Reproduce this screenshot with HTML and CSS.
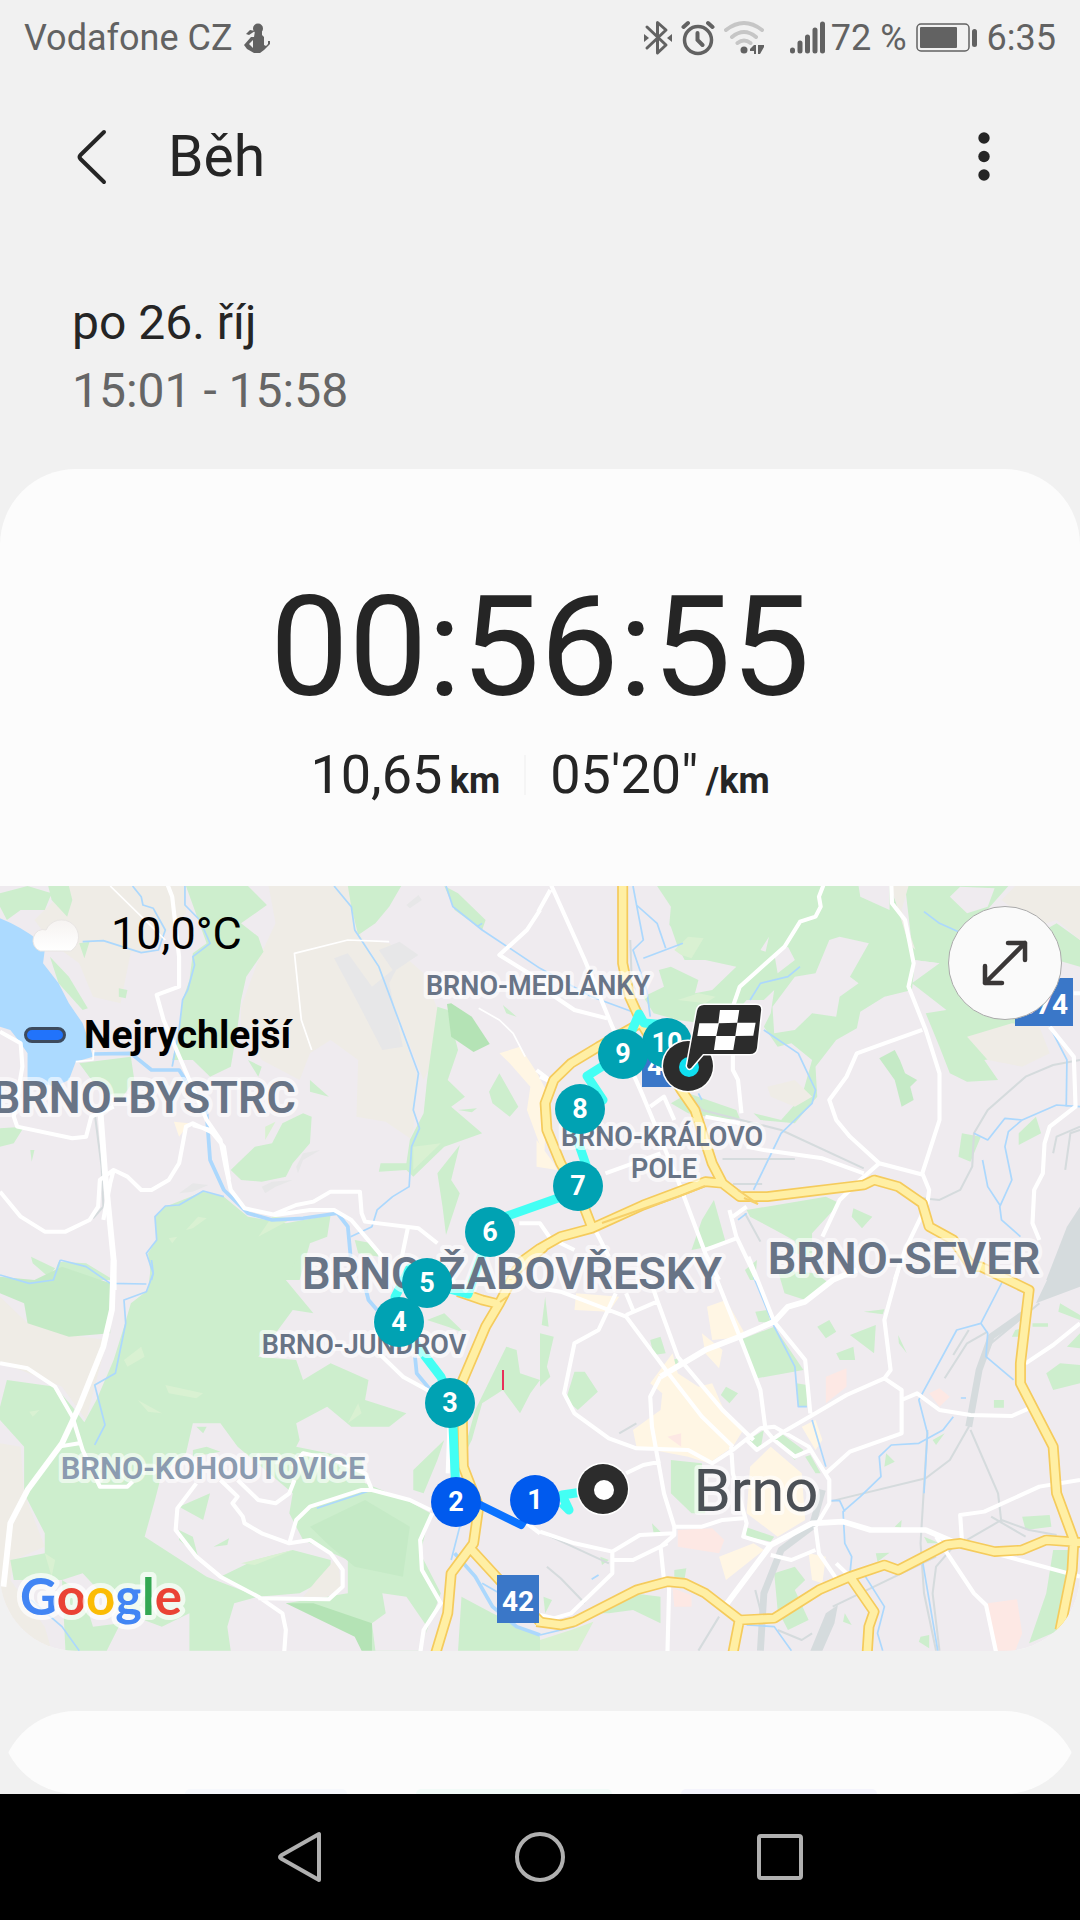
FILE: index.html
```html
<!DOCTYPE html>
<html lang="cs">
<head>
<meta charset="utf-8">
<meta name="viewport" content="width=device-width, initial-scale=1">
<title>Běh</title>
<link rel="stylesheet" href="styles.css">
</head>
<body>
<div class="status">
  <div class="status-group">
    <span>Vodafone CZ</span>
    <svg class="carrier-icon" width="26" height="30" viewBox="0 0 26 30" aria-hidden="true">
      <circle cx="14" cy="5.500" r="5"/><path d="M11 8h7v4l2 2v8l2 1 2-2v-3h2v3l-6 6-4 3h-6l-7-4-3-4 7-8h3zM2 11l4-4 5 1-6 4zM5 21l4 4V17z" fill-rule="evenodd"/>
    </svg>
  </div>
  <div class="status-group">
    <svg width="28" height="36" viewBox="0 0 28 36" aria-label="Bluetooth"><path d="M3 7l19 18-8.500 8V2.500L22 10 3 28" fill="none" stroke="currentColor" stroke-width="3" stroke-linejoin="round" stroke-linecap="round"/><path d="M0 14l5 4-5 4zM28 14l-5 4 5 4z"/></svg>
    <svg class="alarm" width="34" height="36" viewBox="0 0 34 36" aria-label="Budík"><g fill="none" stroke="currentColor" stroke-linecap="round" stroke-width="4"><circle cx="17" cy="20" r="13.500" stroke-width="3.500"/><path d="M16.500 13v7l5 5M2.500 7L7 3M31.500 7L27 3"/></g></svg>
    <svg class="wifi" width="40" height="36" viewBox="0 0 40 36" aria-label="Wi-Fi"><g fill="none" stroke="#c6c6c6" stroke-width="4" stroke-linecap="round"><path d="M2 10q18-14 36 0M8 17q12-10 24 0M13.500 23q6.500-5 13 0"/></g><circle cx="20" cy="30" r="3.500"/><path d="M32 25v9h-2v-3h-4v-2l4-4zM34 25v9h2l4-7v-2z"/></svg>
    <svg class="signal" width="36" height="36" viewBox="0 0 36 36" aria-label="Signál"><g stroke="currentColor" stroke-width="5" stroke-linecap="round"><path d="M2.500 30v1M10 23v8M17.500 17v14M25 10v21M32.500 4v27"/></g></svg>
    <span>72 %</span>
    <svg class="battery" width="62" height="30" viewBox="0 0 62 30" aria-label="Baterie"><rect x="1" y="1" width="52" height="27" rx="4" fill="none" stroke="currentColor" stroke-width="1.500"/><rect x="4" y="4" width="37" height="21" rx="1"/><rect x="56" y="6" width="5" height="18" rx="2.500"/></svg>
    <span>6:35</span>
  </div>
</div>

<header class="toolbar">
  <button class="icon-button" type="button" aria-label="Zpět">
    <svg width="30" height="56" viewBox="0 0 30 56"><path d="M27 3L3.500 26q-2 2 0 4L27 53" fill="none" stroke="currentColor" stroke-width="4" stroke-linecap="round"/></svg>
  </button>
  <h1>Běh</h1>
  <button class="icon-button more" type="button" aria-label="Další možnosti">
    <svg width="12" height="50" viewBox="0 0 12 50"><circle cx="6" cy="6" r="5.700"/><circle cx="6" cy="24.500" r="5.700"/><circle cx="6" cy="43" r="5.700"/></svg>
  </button>
</header>

<main>
  <section class="when">
    <p>po 26. říj</p>
    <p class="muted">15:01 - 15:58</p>
  </section>

  <section class="card">
    <div class="summary">
      <p class="timer">00:56:55</p>
      <div class="metrics">
        <p>10,65 <b>km</b></p>
        <span class="divider"></span>
        <p>05'20" <b>/km</b></p>
      </div>
    </div>

    <div class="map">
      <svg class="map-canvas" viewBox="0 886 1080 765" role="img" aria-label="Mapa trasy, Brno">
        <defs>
          <g id="highways">
            <path transform="translate(540 880) scale(.3444 .3333)" d="M240 0V250L260 350 300 440 410 630 450 690 500 850 530 910 580 950 660 950 940 915 970 900 1040 920 1110 970 1130 1040 1200 1080 1260 1170M290 430L170 500 90 550 40 600 15 670 20 750 60 850 120 960 150 1040M-60 1150L0 1105 60 1070 150 1045 300 975 480 905 530 910"/>
            <path transform="translate(0 1260) scale(.3444 .3333)" d="M1580 -40L1500 30 1450 130 1410 200 1340 370 1345 620 1390 740 1375 850 1310 940 1300 1060 1265 1180M1330 95L1400 120 1440 130M1370 870L1450 960 1568 1085"/>
            <path transform="translate(540 1260) scale(.3444 .3333)" d="M-10 1085L60 1095 100 1085 280 990 370 965 420 970 480 1000 580 1080 680 1075 810 990 900 950 1000 915 1040 930 1180 855 1220 850 1320 875 1400 870 1470 840 1580 848M580 1075L560 1180M900 950L970 1055 955 1100 950 1180M1240 20L1280 20 1420 90 1395 310 1395 370 1490 560 1500 700 1550 840 1545 930 1510 1110"/>
          </g>
        </defs>
        <rect class="land" y="886" width="1080" height="765"/>

        <!-- Land cover, one group per quarter of the map -->
        <g transform="translate(0 880) scale(.3444 .3333)">
          <path class="field" d="M200 18H540V100L480 160 430 220 380 215 350 370 270 350 230 250 150 190 100 120ZM780 18H1010L1040 150 1100 260 1210 580 1200 750 1190 775 1120 725 1035 710 1040 540 960 480 900 520 870 600 760 540 700 440 700 380 750 240 800 130ZM1060 180L1130 190 1230 280 1290 440 1270 520 1230 600 1100 260Z"/>
          <path class="airfield" d="M970 235L1010 220 1080 320 1140 270 1100 210 1160 185 1215 225 1150 270 1130 310 1170 500 1110 510 1040 370ZM1180 75L1215 45 1225 60 1190 85ZM860 860L880 820 930 810 880 840 865 880ZM760 920L790 905 850 900 800 920 770 940ZM520 940L560 910 605 915 560 935Z"/>
          <path class="green" d="M540 18H720L775 75 700 130 750 170 765 215 715 290 700 360 690 440 670 560 610 590 560 540 500 540 520 450 530 360 550 300 560 220 600 190ZM1010 18H1165L1130 80 1090 130 1040 165 1020 80ZM0 40L80 18 150 40 130 90 60 90 20 120 0 80ZM140 18H200L210 60 195 110 150 60ZM145 230L200 290 255 385 240 390 170 310ZM230 190L260 185 245 235ZM345 325L370 330 365 355 345 350ZM230 550L380 530 390 600 350 660 280 620ZM690 850L740 800 790 790 820 730 880 700 905 710 900 790 850 850 830 890 760 905 700 900 670 870ZM480 980L590 935 650 950 720 1010 830 1030 960 1005 950 1070 900 1090 870 1200H440L430 1120 455 1080 450 1010ZM1270 380L1300 390 1330 510 1300 600 1350 650 1310 680 1400 760 1290 800 1200 890 1180 870 1100 875 1105 850 1180 850 1190 780 1230 700 1240 600ZM1335 795L1310 900 1335 940 1295 1065 1285 980 1270 880ZM1420 635L1450 580 1505 680 1480 710 1430 670ZM1290 18L1330 40 1410 120 1400 150 1320 90ZM900 600L955 650 900 635ZM170 1145L250 1150 330 1200H150ZM90 1130L160 1165 140 1190 95 1150ZM0 745L70 740 40 790 0 800ZM720 540L760 560 750 590ZM1330 690L1385 685 1370 697ZM1460 375L1500 410 1470 400ZM88 810H100L92 845ZM1030 1080L1080 1090 1100 1130 1040 1120Z"/>
          <path class="meadow" d="M540 1050L575 1010 600 1015 560 1045ZM770 740L800 725 770 780ZM750 1070L790 1010 850 1015ZM1200 800L1280 790 1200 870ZM490 1075L515 1070 500 1090Z"/>
          <path class="park" d="M1298 372L1310 370 1370 410 1422 492 1375 516 1310 470Z"/>
          <path class="shopping" d="M1450 520L1510 500 1560 580 1590 640 1580 830 1530 690 1540 620 1480 550ZM505 725L550 730 520 770Z"/>
          <path class="lake" d="M0 115Q60 140 110 180L130 210 125 250 170 310 200 370 240 430 250 460 270 530 220 545 200 600 160 620 80 600 80 520 60 490 30 450 0 440Z"/>
        </g>
        <g transform="translate(540 880) scale(.3444 .3333)">
          <path class="green" d="M300 18H1015L1050 110 1090 230 1080 330 1000 350 930 395 920 445 860 480 800 560 805 650 740 730 640 720 620 700 700 720 760 650 790 540 730 490 690 500 650 440 670 400 680 330 650 360 600 360 550 420 470 430 400 420 330 400 300 350 360 320 345 270 380 260 460 300 450 340 500 330 570 260 480 240 420 240 400 200 380 140 340 90ZM1060 18H1360L1290 100 1400 190 1500 130 1568 180V260L1500 240 1510 330 1380 480 1360 530 1290 540 1330 600 1240 605 1190 580 1160 500 1120 400 1180 390 1080 310 1160 250 1085 240ZM600 990L830 950 870 970 790 1060 770 1100 700 1060 610 1010ZM910 985L965 1010 935 1045 905 1010ZM505 960L540 1090 440 1110 470 1020ZM1390 760L1440 710 1455 760 1390 795ZM1225 760L1280 770 1250 845 1215 830ZM380 670L430 640 570 690 580 715 540 720 430 700ZM595 1170L630 1140 625 1200H610ZM740 1060H790V1130L740 1120Z"/>
          <path class="land" d="M840 180L870 170 955 190 900 290 925 310 870 350 860 410 790 400 740 450 680 460 675 380 740 290 800 280ZM680 220L720 200 740 240 690 280ZM925 18H1015V90L930 50ZM1190 50L1220 20 1320 25 1300 80 1240 100ZM1085 240L1160 250 1090 280ZM640 210L665 170 655 215ZM255 18H340L380 80 375 140 300 70Z"/>
          <path class="field" d="M1380 18H1568V180L1500 120 1440 140 1340 60ZM1240 470L1370 430 1450 440 1480 520 1400 560 1300 540ZM660 620L740 600 790 650 740 680 670 650ZM1020 18H1070L1050 90 1090 210 1070 190 1040 90Z"/>
          <path class="meadow" d="M390 210L430 170 475 175 440 235 410 225ZM400 360L460 340 510 350 480 370Z"/>
          <path class="wood" d="M985 535L1030 510 1045 540 1060 580 1095 600 1075 620 1085 660 1050 680 1030 600Z"/>
          <path class="shopping" d="M-10 780L40 850 50 870 -10 860Z"/>
          <path class="rail-yard" d="M1568 980L1530 1040 1470 1200H1568Z"/>
        </g>
        <g transform="translate(0 1260) scale(.3444 .3333)">
          <path class="field" d="M0 110L80 190 240 230 310 240 250 480 180 380 60 330 0 310ZM0 550L60 560 70 700 130 860 40 900 30 960 130 1100 150 1172H0Z"/>
          <path class="green" d="M440 0H860L830 60 910 160 850 150 750 290 860 300 880 360 960 310 1070 360 1060 420 1180 460 1130 500 1020 500 950 440 860 490 870 540 860 560 1050 600 1060 670 1180 720 1250 760 1220 880 1280 1000 1240 1110 1220 1172H1080L1050 1100 830 1030 1010 1000 1010 900 880 840 840 760 850 700 690 560 640 490 560 490 540 580 470 640 450 720 420 830 600 950 750 1010 680 1030 660 1100 670 1172H550L550 1060 470 1100 340 1050 240 940 180 960 40 960 30 900 130 880 130 820 70 700 70 560 0 480V440L20 360 160 380 210 440 245 487 280 420 330 300 360 200 380 130 430 90Z"/>
          <path class="green" d="M1200 630L1290 540 1270 600 1230 700 1200 690ZM1380 450L1470 260 1500 270 1510 340 1568 360 1540 400 1510 460 1460 390 1400 430 1370 540 1340 600ZM1340 1010L1430 1060 1568 1130V1172H1330ZM520 740L610 700 590 780ZM520 810L560 830 575 890 520 840ZM620 860L665 835 660 855ZM180 960L240 1000 270 1100 350 1090 310 1172H190ZM640 950L740 900 850 870 960 900 960 950 870 1000 750 1010ZM570 500L600 500 590 520ZM560 570L600 560 640 575 560 590ZM1240 180L1290 160 1350 220 1300 200Z"/>
          <path class="wood" d="M0 50L100 60 180 20 320 70 320 220 200 230 80 190 70 130 0 100ZM900 800L1060 720 1190 800 1170 950 1030 920 960 860Z"/>
          <path class="meadow" d="M480 375L590 400 570 415 490 400ZM400 420L470 460 430 455ZM360 300L410 260 420 290 370 320ZM1010 490L1040 430 1050 460ZM85 455L115 450 95 470ZM700 910L850 870 740 915ZM130 880L160 900 150 950Z"/>
          <path class="land" d="M1180 1010L1110 1000 1120 1060 1080 1090 1090 1172H1230L1240 1100ZM450 0H460L520 0Z"/>
          <path class="park" d="M830 1030L910 1030 1080 1090V1172H1050L1030 1130Z"/>
          <path class="field" d="M920 960L980 890 990 980 950 1010 880 1010Z"/>
        </g>
        <g transform="translate(540 1260) scale(.3444 .3333)">
          <path class="green" d="M580 240L680 200 765 330 630 355ZM100 335L130 335 168 395 110 450 75 420ZM380 600L470 610 480 760 440 760 380 700ZM0 220L40 230 20 320 30 350 0 380ZM5 195L15 110 25 200ZM900 225L975 195 970 280ZM805 200L840 180 860 215 830 235ZM860 280L910 260 915 300 870 300ZM940 155L1000 148 995 163ZM1040 225L1065 280 1042 250ZM1470 340L1510 310 1568 315V370L1490 390ZM1510 130L1568 165V180L1505 155ZM1430 190H1475V200H1430ZM1380 210L1420 200V230H1370ZM1530 260L1568 220V265ZM1490 870L1540 870 1510 1110 1420 1150 1470 1000ZM1400 770L1480 765 1485 800 1410 810ZM680 940L740 920 770 960 740 990 780 1080 720 1110 690 1050ZM150 1060L270 1000 350 1010 350 1090 270 1050 200 1060ZM320 240L350 230 365 280 330 285ZM385 300L400 295 400 325ZM605 540L650 510 640 570ZM670 530L700 520 765 570 740 600ZM770 590L785 585 815 640 800 640ZM540 380L575 400 550 430 525 405ZM595 800L680 830 670 845 600 830ZM690 30L800 40 840 70 770 120 710 100ZM625 155L660 150 670 190 635 185ZM745 370L775 375V440H750ZM1005 580L1030 605 1000 620ZM1140 540L1175 520 1150 555ZM1318 420H1347V443H1318ZM1115 830L1160 850 1125 850ZM1030 800L1050 780 1048 805ZM390 930L425 925 420 955 390 950ZM885 1060L905 1095 880 1085ZM1105 1130L1130 1125V1165L1100 1145ZM975 880L1015 878 980 905ZM175 890L200 900 180 915ZM325 790L350 815 330 820ZM10 1010L35 1020 15 1060Z"/>
          <path class="meadow" d="M0 1140L90 1110 155 1085 110 1172H0Z"/>
          <path class="shopping" d="M105 100L230 110 200 155 100 150ZM385 280L400 340 460 380 500 370 530 440 590 510 560 560 490 610 430 590 280 560 270 510 350 450 355 400 320 370ZM485 140L540 120 600 230 500 240ZM470 220L530 270 520 325 480 280ZM610 620L670 560 760 640 770 780 690 830 600 760ZM520 890L620 850 650 870 540 960ZM780 880L830 890 820 970 790 960ZM760 500L800 480 820 540 800 570Z"/>
          <path class="hospital" d="M400 810L500 805 535 840 520 880 400 860ZM830 350L890 325 890 380 830 430ZM1130 400L1160 385 1190 410 1160 440ZM1300 1030L1385 1018 1400 1120 1380 1172H1320ZM385 985L440 1005V1040L390 1040ZM370 530L410 520V560Z"/>
          <path class="rail-yard" d="M1500 0H1568V80L1440 130ZM830 1060L865 1035 855 1090 820 1172H785Z"/>
        </g>

        <g class="rail">
          <path transform="translate(540 880) scale(.3444 .3333)" d="M1568 540L1490 555 1410 590 1300 690 1260 760 1255 860 1220 930 1160 960 1110 955M400 600L470 690 700 750 940 865M530 837H740M560 912H645M595 1000L640 1085M1490 820L1500 770 1568 740M1525 870L1540 760 1568 750M262 180L270 400"/>
          <path transform="translate(540 1260) scale(.3444 .3333)" d="M1450 130L1310 250 1270 330 1245 500 1190 600 1120 655 840 725M1250 510L1330 700 1340 790M1125 510L1105 850 1115 1000 1150 1172M1300 215L1240 250 1175 355M1245 210L1200 285M850 1040L1150 890M20 920L60 955 130 1030M520 1070L460 1172M0 815L200 910M1240 840L1340 780 1420 810 1500 825M1310 770L1410 830M1200 860L1150 920 1140 1000 1160 1172M230 520L280 490M690 1110L760 1140 790 1120M625 990L640 1050"/>
          <path class="rail-wide" transform="translate(540 1260) scale(.3444 .3333)" d="M820 690L790 800 700 870 650 1000 640 1172M1420 150L1310 230 1275 330 1245 500"/>
          <path transform="translate(0 880) scale(.3444 .3333)" d="M275 700L295 860 300 980 270 1015"/>
        </g>

        <g class="water">
          <path transform="translate(0 880) scale(.3444 .3333)" d="M385 18L410 50 415 75 445 85 480 150 460 210 410 218 300 182 240 185M537 18V75L580 120 610 190 560 230 565 255 545 330 530 360 520 450 500 560M970 18L1020 80 1030 150 1100 260 1215 580 1200 690 1218 745 1195 800 1188 920 1140 950 1095 990 1080 1040 1018 1070M1295 18L1315 80 1400 150 1568 265M650 950L590 933 520 975 480 978 450 1010 455 1080 425 1120 445 1180 440 1200M1385 140L1400 130"/>
          <path class="river" transform="translate(0 880) scale(.3444 .3333)" d="M270 522L380 520 440 570 520 570 600 700 610 840 650 930 720 1000 790 1020 880 1015 980 1000 1010 1040 1018 1130"/>
          <path transform="translate(540 880) scale(.3444 .3333)" d="M270 18L285 100 300 180 270 210 310 330 320 410M415 190L300 235M280 75L340 130 365 205M755 260L720 290 640 310 610 360M650 450L750 520 800 630 790 670 740 720 700 760 620 930M1115 95L1160 130 1215 155M1480 440L1530 540 1528 680M1568 680L1500 675 1400 720 1360 755 1350 800 1370 900 1335 980 1340 1020 1395 1070M1335 975L1300 920 1285 840M1400 720L1350 715 1300 780 1260 760M0 265L150 350 280 400M600 1000L575 1020M460 640L470 660"/>
          <path transform="translate(0 1260) scale(.3444 .3333)" d="M440 0L445 40 425 95 360 120 365 190 335 340 275 375 305 495 275 555M0 45L85 70 155 60 175 0M175 0L250 20 320 70 425 72M90 1020L180 1100 230 1172M920 745L1080 690M1400 970L1568 1070M1335 800L1310 900"/>
          <path class="river" transform="translate(0 1260) scale(.3444 .3333)" d="M1055 60L1070 120 1095 150M1205 290L1210 340 1250 390M1320 880L1380 950 1430 1040 1500 1100 1568 1125"/>
          <path transform="translate(540 1260) scale(.3444 .3333)" d="M620 50L680 200 740 320 750 440 775 440M790 480L830 620M1345 60L1280 190 1210 210 1100 420 1125 520 1115 700M1280 190L1300 220 1295 290 1375 360M1200 470L1170 510 1100 550 1020 555 985 590 990 650 930 710 880 755 885 850 905 890 900 940M845 722L870 722 885 755M945 950L1000 1040 980 1120 995 1172M0 1125L100 1100M600 1095L680 1100 730 1172M1110 900L1155 1172M150 958L170 945M1222 414H1237"/>
        </g>

        <g class="road">
          <path transform="translate(0 880) scale(.3444 .3333)" d="M485 10L500 50 520 230 520 320 455 345 475 420 600 720 640 780 655 860 670 930 710 985 800 1005 900 990 970 990 1020 1020 1110 1130M560 735L610 750 650 800 665 900M0 455L60 490 65 560 40 710 50 740 210 775 250 770 265 710 330 680M0 935L60 1010 130 1055 190 1055 260 1020 285 980 290 900 330 870 370 890 410 930 440 930 490 900 520 850 540 740 560 730 620 760M790 1005L860 975 910 965 960 935 1045 935 1050 1000 1060 1025 1215 1045 1270 1090M1185 1040L1165 1140M330 870L320 910 300 1020M1568 90L1530 150 1450 225 1520 270 1568 300"/>
          <path class="road-major" transform="translate(0 880) scale(.3444 .3333)" d="M292 700L305 880 330 1140V1230"/>
          <path class="road-minor" transform="translate(0 880) scale(.3444 .3333)" d="M320 18L480 180M1130 185L1010 180 855 220 875 420 905 510M1390 385L1450 420 1490 460 1525 530M220 545L270 540 272 510"/>
          <path transform="translate(540 880) scale(.3444 .3333)" d="M30 10L130 240 210 440 300 650 400 900 480 1120 520 1200M30 30L-5 95M825 10L810 50 815 80 800 110 755 125 710 200 580 320 560 380V570L575 600 585 700M1020 10L1022 70 1060 120 1085 250 1070 320 1120 450 1160 580 1160 720 1110 880 1130 930 1125 970 1060 1110 1030 1200M1110 450L1000 490 920 520 890 590 840 660 860 720 900 770 985 850 1115 885M985 850L930 900 870 960 820 1070M480 710L580 730M600 800L650 810 820 835 940 880M1480 440L1550 530 1555 680 1480 740 1465 790 1460 880 1435 930 1430 1030 1450 1080M1550 340H1570M0 320L100 390 195 415M190 880L350 820M320 680L360 650 390 720M550 990L570 1070 630 1200M480 1110L570 1075M600 980L560 1010M160 1050L200 1130M-60 1030L0 1030 30 1075 100 1110M-10 570L40 610 0 590"/>
          <path transform="translate(0 1260) scale(.3444 .3333)" d="M0 310L80 325 160 380 210 470 240 570 290 680 370 680 385 665M170 560L230 550M570 670L515 745 510 810 570 890 640 950 750 1010 820 1060 830 1110 825 1180M640 660L690 710 675 730 705 770 710 790 760 820 840 850 900 840 960 880 995 930 995 980 955 1018 750 1015M840 850L860 780 900 740 1050 690 1080 690 1060 640 970 600 880 580 850 620M1080 690L1190 720 1250 750M1255 760L1220 840 1225 930 1280 1030 1230 1110 1220 1180M690 660L750 720 800 730 840 700 855 660M1090 180L1100 280 1170 350 1250 395M1305 500L1300 640M1530 790L1568 820M1290 20L1320 70"/>
          <path class="road-major" transform="translate(0 1260) scale(.3444 .3333)" d="M330 0L325 150 300 260 230 440 180 550 80 690 30 790 10 980"/>
          <path transform="translate(540 1260) scale(.3444 .3333)" d="M0 85L60 95 200 150 250 170 380 350 470 470 560 560M320 60L340 120 400 290 530 450 620 540M340 125L250 165M250 100L270 150M220 100L170 210 100 250 70 400 100 460 200 535 280 565 430 570 500 610 560 570M350 350L320 410 325 500 360 700 390 800 390 825 350 860 360 960 375 980 370 1180M510 50L580 230 640 390 655 510 680 540 740 590 785 570M605 -10L680 185 770 300 785 460M1045 10L1000 180 1018 330 1000 355 890 405 800 460 700 520 630 570 600 540M1000 355L1050 390 1050 520 900 575 830 640M560 570L640 505 680 500 780 560 840 660 840 730 800 800M555 560L560 640 600 790 590 830 670 855M670 885L730 900 800 870M800 800L810 880 860 955M860 910L900 950M1050 420L1095 400 1160 450 1250 465 1370 468 1420 445M1568 660L1450 680 1290 755 1220 765 1225 840M1150 830L1260 1000 1295 1035 1325 1180M1320 880L1568 950M1410 310L1490 255 1568 190M0 815L100 850 210 875 290 825 390 820M210 875V940L90 1060 40 1075 0 1065M215 900L270 900 370 850M390 800L470 800 530 780 590 775M250 640L300 615 350 605"/>
          <path class="road-major" transform="translate(540 1260) scale(.3444 .3333)" d="M350 350L480 270 580 230 680 185 720 140 770 125 850 60 920 30M540 1035L670 855 790 790 880 785 960 810 1120 810 1210 850"/>
        </g>

        <use href="#highways" class="highway-edge"/>
        <use href="#highways" class="highway"/>
        <path class="highway-split" d="M602 1223L680 1196 705 1186M744 1198l14 6-20-14M500 1302l7-5"/>

        <g class="signs">
          <rect x="497" y="1575" width="42" height="48"/>
          <rect x="642" y="1039" width="42" height="48"/>
          <rect x="1015" y="978" width="58" height="48"/>
          <text x="518" y="1611">42</text>
          <text x="663" y="1075">42</text>
          <text x="1044" y="1014">374</text>
        </g>

        <g class="route">
          <path d="M603 1489L562 1495 569 1510 562 1503M456 1495L452 1403 441 1377 399 1322 395 1297 410 1268 427 1283 468 1294 490 1232M490 1222L578 1191M578 1186L586 1165 574 1130 580 1109 603 1100 587 1076 622 1054 639 1014 644 1023 667 1025"/>
          <path class="fast" d="M456 1493L521 1525 535 1503"/>
        </g>
        <path class="tick" d="M503 1370v20"/>

        <g class="labels">
          <text class="town" x="296" y="1113" text-anchor="end">BRNO-BYSTRC</text>
          <text class="town" x="512" y="1289">BRNO-ŽABOVŘESKY</text>
          <text class="town" x="904" y="1274">BRNO-SEVER</text>
          <text x="538" y="995">BRNO-MEDLÁNKY</text>
          <text x="662" y="1146">BRNO-KRÁLOVO</text>
          <text x="664" y="1178">POLE</text>
          <text x="364" y="1354">BRNO-JUNDROV</text>
          <text class="quarter" x="213" y="1479">BRNO-KOHOUTOVICE</text>
          <text class="city" x="756" y="1511">Brno</text>
        </g>

        <g class="pins">
          <circle cx="667" cy="1043" r="25"/><text x="667" y="1052">10</text>
          <circle cx="623" cy="1054" r="25"/><text x="623" y="1063">9</text>
          <circle cx="580" cy="1109" r="25"/><text x="580" y="1118">8</text>
          <circle cx="578" cy="1186" r="25"/><text x="578" y="1195">7</text>
          <circle cx="490" cy="1232" r="25"/><text x="490" y="1241">6</text>
          <circle cx="427" cy="1283" r="25"/><text x="427" y="1292">5</text>
          <circle cx="399" cy="1322" r="25"/><text x="399" y="1331">4</text>
          <circle cx="450" cy="1403" r="25"/><text x="450" y="1412">3</text>
          <circle class="fast" cx="456" cy="1502" r="25"/><text x="456" y="1511">2</text>
          <circle class="fast" cx="535" cy="1500" r="25"/><text x="535" y="1509">1</text>
        </g>

        <g class="ends">
          <circle class="dark" cx="603" cy="1489" r="25"/><circle class="white" cx="604" cy="1490" r="10"/>
          <circle class="dark" cx="688" cy="1066" r="25"/><circle class="now" cx="689" cy="1067" r="10"/>
          <path class="dark" d="M704 1005H756Q762 1005 761 1011L757 1048Q756 1054 750 1054H703L691 1068Q688 1070 687 1066L697 1011Q698 1005 704 1005Z"/>
          <path class="white" transform="translate(380 980) scale(.3333)" d="M1020 90L1078 90 1072 128 1127 128 1120 167 1067 168 1060 210 1002 210 1008 168 952 168 958 130 1015 130ZM1017 130L1009 168 1066 168 1072 128Z" fill-rule="evenodd"/>
        </g>

        <text class="google" x="20" y="1615"><tspan fill="#4285f4">G</tspan><tspan fill="#ea4335">o</tspan><tspan fill="#fbbc05">o</tspan><tspan fill="#4285f4">g</tspan><tspan fill="#34a853">l</tspan><tspan fill="#ea4335">e</tspan></text>
      </svg>

      <div class="overlay">
        <p class="weather">
          <svg width="54" height="40" viewBox="0 0 54 40" aria-label="Oblačno"><defs><linearGradient id="cloud" x2="0" y2="1"><stop stop-color="#f6f3f1"/><stop offset="1" stop-color="#fff"/></linearGradient></defs><path d="M12 37A10 11 0 1 1 18 16A17 17 0 1 1 43 37Z" fill="url(#cloud)" stroke="#e9e6e4"/></svg>
          <span>10,0°C</span>
        </p>
        <p class="legend"><i class="swatch"></i><span>Nejrychlejší</span></p>
      </div>
      <button class="expand" type="button" aria-label="Zvětšit mapu">
        <svg width="46" height="46" viewBox="0 0 46 46"><path d="M3 43L43 3M26 3H43V20M3 26V43H20" fill="none" stroke="#3a3737" stroke-width="4.500" stroke-linecap="round" stroke-linejoin="round"/></svg>
      </button>
    </div>
  </section>

  <section class="card-peek">
    <div class="peek-body">
      <span class="chip blue"></span><span class="chip mint"></span><span class="chip violet"></span>
    </div>
  </section>
</main>

<nav class="system-nav" aria-label="Systémová navigace">
  <button type="button" aria-label="Zpět"><svg width="52" height="52" viewBox="0 0 52 52"><path d="M45 3V49L7 27.500Q5 26 7 24.500Z"/></svg></button>
  <button type="button" aria-label="Domů"><svg width="52" height="52" viewBox="0 0 52 52"><circle cx="26" cy="26" r="23"/></svg></button>
  <button type="button" aria-label="Poslední aplikace"><svg width="52" height="52" viewBox="0 0 52 52"><rect x="5" y="5" width="42" height="42" rx="2"/></svg></button>
</nav>
</body>
</html>
```
FILE: styles.css
```css
* { box-sizing: border-box; }

body {
  margin: 0;
  min-height: 100vh;
  display: flex;
  flex-direction: column;
  background: #f1f1f1;
  color: #252525;
  font-family: Roboto, "Noto Sans", sans-serif;
}

p, h1 { margin: 0; font-weight: 400; }
svg { display: block; fill: currentColor; }

button {
  padding: 0;
  border: 0;
  background: none;
  color: inherit;
  font: inherit;
}

/* Status bar */
.status {
  display: flex;
  justify-content: space-between;
  padding: 16px 24px;
  color: #626262;
  font-size: 36px;
  line-height: 44px;
}
.status-group { display: flex; align-items: center; }
.carrier-icon { margin-left: 12px; }
.alarm { margin-left: 9px; }
.wifi { margin-left: 9px; }
.signal { margin: 0 5px 0 26px; }
.battery { margin: 0 9px; }

/* Toolbar */
.toolbar {
  display: flex;
  align-items: center;
  height: 162px;
  padding: 0 64px 0 60px;
}
.toolbar h1 { font-size: 57px; line-height: 68px; margin-left: 44px; }
.icon-button { display: grid; place-items: center; width: 64px; height: 64px; }
.more { margin-left: auto; }

.when {
  padding: 51px 72px 44px;
  font-size: 48px;
  line-height: 68px;
}
.muted { color: #666; }

/* Workout card */
.card {
  border-radius: 76px;
  overflow: hidden;
  background: #fcfcfc;
}
.summary { padding: 98px 24px 79px; text-align: center; }
.timer { font-size: 140px; line-height: 160px; }
.metrics {
  display: flex;
  justify-content: center;
  align-items: center;
  gap: 24px;
  margin-top: 16px;
  font-size: 54px;
  line-height: 64px;
}
.metrics b { margin-left: -6px; font-size: 36px; line-height: 36px; }
.divider { width: 2px; height: 40px; background: #f5f5f5; }

/* Map */
.map { position: relative; }
.map-canvas { width: 100%; height: auto; }
.land { fill: #efebef; }
.field { fill: #efece6; }
.airfield { fill: #e7e7e8; }
.green { fill: #cdeecd; }
.wood { fill: #c5eac6; }
.meadow { fill: #d9f1d2; }
.park { fill: #b4e3b5; }
.lake { fill: #acdaff; }
.shopping { fill: #fff6e4; }
.hospital { fill: #fde8e4; }
.rail-yard { fill: #d5dbdd; }
.rail, .water, .road { fill: none; stroke-linejoin: round; }
.rail { stroke: #d5dbdd; stroke-width: 6; }
.rail-wide { stroke-width: 20; }
.water { stroke: #acd8fd; stroke-width: 5; }
.river { stroke-width: 11; }
.road { stroke: #fff; stroke-width: 12; }
.road-major { stroke-width: 17; }
.road-minor { stroke-width: 5; }
.highway-edge, .highway { fill: none; stroke-linejoin: round; }
.highway-edge { stroke: #f5cb5c; stroke-width: 32; }
.highway { stroke: #ffefa4; stroke-width: 22; }
.highway-split { fill: none; stroke: #f6d06a; stroke-width: 2; }

.signs rect { fill: #3a77c8; }
.signs text { fill: #fff; font-size: 28px; font-weight: 700; text-anchor: middle; }

.route { fill: none; stroke: #43fff4; stroke-width: 9; stroke-linejoin: round; }
.route .fast { stroke: #0a72ff; stroke-width: 8; }
.tick { stroke: #e8305a; stroke-width: 2; }

.labels {
  fill: #687486;
  stroke: rgb(255 255 255 / 60%);
  stroke-width: 8px;
  stroke-linejoin: round;
  paint-order: stroke;
  font-size: 27px;
  font-weight: 600;
  text-anchor: middle;
}
.town { font-size: 45px; }
.town[text-anchor="end"] { text-anchor: end; }
.quarter { fill: #8b9bb0; font-size: 31px; }
.city { fill: #4b5056; font-size: 60px; font-weight: 400; }

.pins circle { fill: #00a2b3; }
.pins .fast { fill: #005aee; }
.pins text { fill: #fff; font-size: 27px; font-weight: 700; text-anchor: middle; }

.dark { fill: #2c2c2c; stroke: #fff; stroke-width: 3px; paint-order: stroke; }
.white { fill: #fff; }
.now { fill: #0fdff0; }

.google {
  font-family: Lato, sans-serif;
  font-size: 51px;
  font-weight: 700;
  stroke: rgb(255 255 255 / 70%);
  stroke-width: 10px;
  stroke-linejoin: round;
  paint-order: stroke;
}

.overlay {
  position: absolute;
  inset: 20px auto auto 24px;
  display: grid;
  gap: 49px;
  color: #000;
}
.weather, .legend { display: flex; align-items: center; }
.weather { gap: 29px; padding-left: 4px; font-size: 45px; line-height: 56px; }
.legend { gap: 18px; font-size: 39px; line-height: 48px; font-weight: 700; }
.swatch {
  width: 42px;
  height: 16px;
  border: 3px solid #3c4a5e;
  border-radius: 8px;
  background: #2173fb;
}

.expand {
  position: absolute;
  top: 20px;
  right: 18px;
  display: grid;
  place-items: center;
  width: 114px;
  height: 114px;
  border: 1px solid #aaa;
  border-radius: 50%;
  background: #fafafa;
}

/* Next card, showing only its top edge */
.card-peek {
  margin-top: 60px;
  border-radius: 76px 76px 0 0;
  overflow: hidden;
}
.peek-body {
  display: flex;
  align-items: flex-end;
  justify-content: center;
  gap: 69px;
  height: 83px;
  padding-right: 19px;
  border-radius: 0 0 76px 76px;
  background: #fcfcfc;
}
.chip { width: 196px; height: 5px; border-radius: 24px 24px 0 0; }
.blue { width: 162px; background: #f6f8fc; }
.mint { background: #f2fbf8; }
.violet { background: #f4f4fc; }

/* System navigation */
.system-nav {
  display: flex;
  justify-content: center;
  align-items: center;
  gap: 188px;
  height: 126px;
  margin-top: auto;
  background: #000;
}
.system-nav svg { fill: none; stroke: #b0b0b0; stroke-width: 4; stroke-linejoin: round; }
```
